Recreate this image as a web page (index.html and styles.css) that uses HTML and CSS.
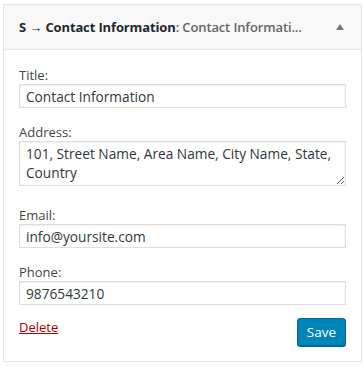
FILE: index.html
```html
<!DOCTYPE html>
<html lang="en">
<head>
    <meta charset="UTF-8">
    <meta name="viewport" content="width=device-width, initial-scale=1.0">
    <title>Contact Information Widget</title>
    <link rel="stylesheet" href="styles.css">
</head>
<body>
    <div class="widget">
        <div class="widget-top">
            <h3 class="widget-title">S &rarr; Contact Information<span class="in-title">: Contact Informati...</span></h3>
            <span class="toggle"></span>
        </div>
        <div class="widget-inside">
            <div class="field">
                <label for="title">Title:</label>
                <input type="text" id="title" class="input" value="Contact Information">
            </div>
            <div class="field">
                <label for="address">Address:</label>
                <textarea id="address" class="input textarea" rows="2">101, Street Name, Area Name, City Name, State, Country</textarea>
            </div>
            <div class="field">
                <label for="email">Email:</label>
                <input type="text" id="email" class="input" value="info@yoursite.com">
            </div>
            <div class="field last">
                <label for="phone">Phone:</label>
                <input type="text" id="phone" class="input" value="9876543210">
            </div>
            <div class="actions">
                <a href="#" class="delete">Delete</a>
                <button class="save">Save</button>
            </div>
        </div>
    </div>
</body>
</html>
```

FILE: styles.css
```css
body {
    margin: 0;
    padding: 4px 1px 0 3px;
    background: #fff;
    font-family: "Open Sans", sans-serif;
    font-size: 13px;
    color: #444;
}

.widget {
    border: 1px solid #e5e5e5;
    box-shadow: 0 1px 1px rgba(0, 0, 0, 0.04);
    background: #fff;
}

.widget-top {
    display: flex;
    align-items: center;
    justify-content: space-between;
    height: 44px;
    padding: 0 15px;
    background: #f8f8f8;
    border-bottom: 1px solid #e5e5e5;
}

.widget-title {
    margin: 0;
    font-size: 13px;
    font-weight: 700;
    letter-spacing: -0.13px;
    color: #23282d;
    white-space: nowrap;
}

.in-title {
    font-weight: 600;
    color: #666;
}

.toggle {
    width: 0;
    height: 0;
    margin-right: 2px;
    border-left: 4px solid transparent;
    border-right: 4px solid transparent;
    border-bottom: 6px solid #72777c;
}

.widget-inside {
    padding: 16px 15px 15px;
}

.field {
    margin-bottom: 15px;
}

.field.last {
    margin-bottom: 13px;
}

.field label {
    display: block;
    line-height: 18px;
}

.input {
    display: block;
    box-sizing: border-box;
    width: 100%;
    height: 24px;
    margin: 0;
    padding: 2px 6px;
    border: 1px solid #ddd;
    box-shadow: inset 0 1px 2px rgba(0, 0, 0, 0.07);
    font-family: "Open Sans", sans-serif;
    font-size: 13.7px;
    color: #32373c;
}

.textarea {
    height: 45px;
    line-height: 19px;
    resize: vertical;
    margin-bottom: 20px;
}

.actions {
    display: flex;
    justify-content: space-between;
    align-items: flex-start;
}

.delete {
    color: #a00;
    line-height: 18px;
}

.save {
    height: 28px;
    padding: 0 9px 1px;
    border: 1px solid #006799;
    border-radius: 3px;
    background: #0085ba;
    box-shadow: 0 1px 0 #006799;
    color: #fff;
    font-family: "Open Sans", sans-serif;
    font-size: 13.5px;
    cursor: pointer;
}
```
